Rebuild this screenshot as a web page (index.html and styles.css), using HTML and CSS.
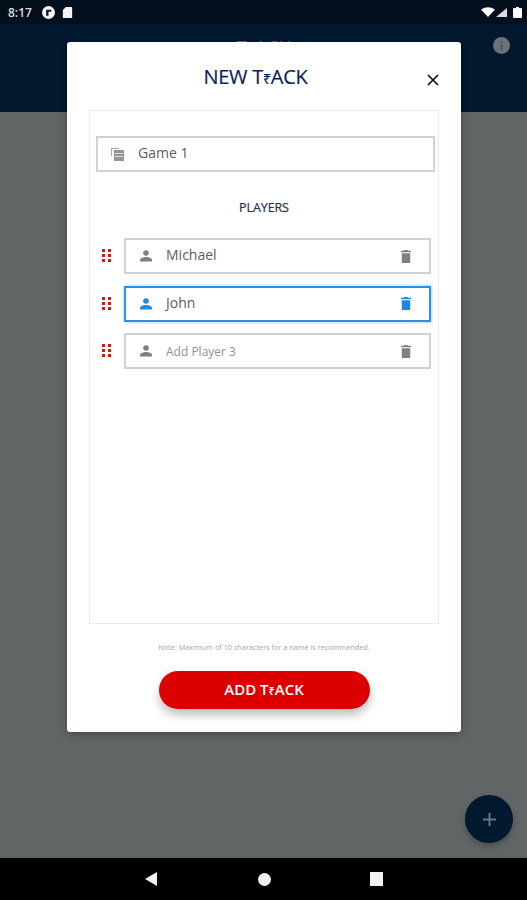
FILE: index.html
```html
<!DOCTYPE html>
<html lang="en">
<head>
  <meta charset="UTF-8" />
  <meta name="viewport" content="width=device-width, initial-scale=1.0"/>
  <title>New Track</title>
  <link rel="stylesheet" href="styles.css">
</head>
<body>
  <div class="screen">
    <div class="status-bar">
      <div class="status-left">
        <span class="clock">8:17</span>
        <svg width="13" height="13" viewBox="0 0 14 14"><circle cx="7" cy="7" r="7" fill="#f4f4f4"/><path d="M4.500 10.500V4h5.500v2.200H7v4.300z" fill="#0a1520"/></svg>
        <svg width="11" height="11" viewBox="0 0 11 13"><path d="M3.500 0H10a1 1 0 0 1 1 1V12a1 1 0 0 1-1 1H1a1 1 0 0 1-1-1V3.500z" fill="#f4f4f4"/></svg>
      </div>
      <div class="status-right">
        <svg class="wifi" width="14" height="10" viewBox="0 0 14 10"><path d="M0 2.500Q7-2 14 2.500L7 10z" fill="#fff"/></svg>
        <svg class="signal" width="11" height="9" viewBox="0 0 11 9"><path d="M11 0V9H0z" fill="#d9dcdf"/></svg>
        <svg width="9" height="11" viewBox="0 0 9 11"><path d="M3 0H6V1H8a1 1 0 0 1 1 1V10a1 1 0 0 1-1 1H1a1 1 0 0 1-1-1V2a1 1 0 0 1 1-1H3z" fill="#fff"/></svg>
      </div>
    </div>
    <div class="app-bar">
      <span class="app-title">T<span class="rupee">₹</span>ACK</span>
      <span class="info-icon">
        <svg width="17" height="17" viewBox="0 0 17 17"><circle cx="8.500" cy="8.500" r="8.500" fill="#6a7276"/><path d="M7.500 7.500h2V13h-2zM7.500 4h2v2h-2z" fill="#4a5357"/></svg>
      </span>
    </div>
    <div class="content">
      <button class="fab">
        <svg width="13" height="13" viewBox="0 0 13 13"><path d="M5.500 0h2v5.500H13v2H7.500V13h-2V7.500H0v-2h5.500z" fill="#6b7478"/></svg>
      </button>
    </div>
    <div class="nav-bar">
      <svg width="12" height="14" viewBox="0 0 12 14"><path d="M12 0V14L0 7z" fill="#f2f2f2"/></svg>
      <span class="nav-circle"></span>
      <span class="nav-square"></span>
    </div>
  </div>

  <div class="modal">
    <div class="modal-head">
      <h1>NEW T<span class="rupee">₹</span>ACK</h1>
      <button class="close">
        <svg width="12" height="12" viewBox="0 0 12 12"><path d="M1 1l10 10M11 1L1 11" stroke="#111" stroke-width="1.700"/></svg>
      </button>
    </div>

    <div class="panel">
      <div class="field game-field">
        <svg class="icon" width="15" height="15" viewBox="0 0 15 15"><path d="M1 1h8v1H2v7H1z" fill="#a8a8a8"/><path d="M4 3h10v11H4z" fill="#959595"/><path d="M5 6h8v1H5zM5 9h8v1H5z" fill="#ddd"/></svg>
        <span class="value">Game 1</span>
      </div>

      <div class="players-title">PLAYERS</div>

      <div class="player-list">
        <div class="player">
          <svg class="drag" width="10" height="14" viewBox="0 0 10 14"><use href="#dots"/></svg>
          <div class="field player-field">
            <svg class="icon" width="12" height="12" viewBox="0 0 12 12"><use href="#person"/></svg>
            <span class="value">Michael</span>
            <svg class="trash" width="10" height="13" viewBox="0 0 10 13"><use href="#trash"/></svg>
          </div>
        </div>
        <div class="player">
          <svg class="drag" width="10" height="14" viewBox="0 0 10 14"><use href="#dots"/></svg>
          <div class="field player-field active">
            <svg class="icon" width="12" height="12" viewBox="0 0 12 12"><use href="#person"/></svg>
            <span class="value">John</span>
            <svg class="trash" width="10" height="13" viewBox="0 0 10 13"><use href="#trash"/></svg>
          </div>
        </div>
        <div class="player">
          <svg class="drag" width="10" height="14" viewBox="0 0 10 14"><use href="#dots"/></svg>
          <div class="field player-field">
            <svg class="icon" width="12" height="12" viewBox="0 0 12 12"><use href="#person"/></svg>
            <span class="value placeholder">Add Player 3</span>
            <svg class="trash" width="10" height="13" viewBox="0 0 10 13"><use href="#trash"/></svg>
          </div>
        </div>
      </div>
    </div>

    <p class="note">Note: Maximum of 10 characters for a name is recommended.</p>
    <button class="add-btn">ADD T<span class="rupee">₹</span>ACK</button>
  </div>

  <svg class="defs" width="0" height="0">
    <defs>
      <g id="dots" fill="#e01010">
        <rect x="0" y="0" width="3" height="3"/><rect x="6" y="0" width="3" height="3"/>
        <rect x="0" y="5" width="3" height="3"/><rect x="6" y="5" width="3" height="3"/>
        <rect x="0" y="10" width="3" height="3"/><rect x="6" y="10" width="3" height="3"/>
      </g>
      <g id="person" fill="currentColor">
        <circle cx="6" cy="3" r="2.800"/>
        <path d="M0 11.500V10c0-2 3.500-3 6-3s6 1 6 3v1.500z"/>
      </g>
      <g id="trash" fill="currentColor">
        <path d="M3.500 0h3l.7.8H10v1.500H0V.8h2.800zM.8 3.200h8.400V13H.8z"/>
      </g>
    </defs>
  </svg>
</body>
</html>
```

FILE: styles.css
```css
* {
  box-sizing: border-box;
}

body {
  margin: 0;
  font-family: "Open Sans", "Noto Sans", sans-serif;
  background: #606565;
}

button {
  border: none;
  padding: 0;
  font-family: inherit;
  cursor: pointer;
}

.defs {
  position: absolute;
}

.rupee {
  font-size: 0.72em;
}

.screen {
  display: flex;
  flex-direction: column;
  height: 900px;
}

.status-bar {
  display: flex;
  justify-content: space-between;
  align-items: center;
  height: 24px;
  padding: 0 5px 0 8px;
  background: #030f1d;
  color: #fff;
}

.status-left,
.status-right {
  display: flex;
  align-items: center;
}

.status-left {
  gap: 7px;
}

.status-right {
  gap: 1px;
}

.status-right .signal {
  margin-right: 5px;
}

.clock {
  width: 27px;
  font-size: 12px;
  font-weight: 600;
  color: #d8dbde;
}

.app-bar {
  position: relative;
  flex: none;
  height: 88px;
  background: #02182f;
  text-align: center;
}

.app-title {
  display: block;
  padding-top: 10px;
  font-size: 19px;
  color: #6a7276;
}

.info-icon {
  position: absolute;
  top: 13px;
  right: 17px;
}

.content {
  position: relative;
  flex: 1;
  background: #606565;
}

.fab {
  position: absolute;
  right: 14px;
  bottom: 15px;
  display: flex;
  justify-content: center;
  align-items: center;
  width: 48px;
  height: 48px;
  border-radius: 50%;
  background: #02182f;
  box-shadow: 0 3px 6px rgba(0, 0, 0, 0.25);
}

.nav-bar {
  display: flex;
  align-items: center;
  justify-content: space-between;
  height: 42px;
  padding: 0 144px 0 145px;
  background: #000;
}

.nav-circle {
  width: 13px;
  height: 13px;
  margin-left: 2px;
  border-radius: 50%;
  background: #f2f2f2;
}

.nav-square {
  width: 13px;
  height: 14px;
  background: #f2f2f2;
}

.modal {
  position: absolute;
  top: 42px;
  left: 67px;
  display: flex;
  flex-direction: column;
  align-items: center;
  width: 394px;
  height: 690px;
  padding: 0 22px;
  background: #fff;
  border-radius: 3px;
  box-shadow: 0 2px 8px rgba(0, 0, 0, 0.3);
}

.modal-head {
  position: relative;
  width: 100%;
  height: 68px;
  text-align: center;
}

.modal-head h1 {
  margin: 0;
  padding: 21px 17px 0 0;
  font-size: 20px;
  font-weight: 400;
  letter-spacing: -0.3px;
  line-height: 28px;
  color: #0b1f57;
  -webkit-text-stroke: 0.2px #0b1f57;
}

.close {
  position: absolute;
  top: 32px;
  right: 0;
  display: flex;
  background: none;
}

.panel {
  width: 350px;
  height: 514px;
  padding: 25px 3px 0 6px;
  border: 1px solid #ececec;
}

.field {
  display: flex;
  align-items: center;
  border: 2px solid #d2d2d2;
  background: #fff;
}

.game-field {
  height: 36px;
  padding-left: 12px;
}

.game-field .icon {
  margin-right: 13px;
}

.value {
  padding-bottom: 3px;
  font-size: 14px;
  color: #5c5c5c;
}

.players-title {
  margin: 28px 0 22px;
  padding-right: 3px;
  font-size: 12.500px;
  line-height: 16px;
  letter-spacing: -0.1px;
  text-align: center;
  color: #1d2f5e;
  -webkit-text-stroke: 0.2px #1d2f5e;
}

.player-list {
  display: flex;
  flex-direction: column;
  gap: 11.5px;
}

.player {
  display: flex;
  align-items: center;
  gap: 12px;
  padding-left: 6px;
  padding-right: 4px;
}

.player-field {
  flex: 1;
  height: 36px;
  padding: 0 18px 0 14px;
  color: #808080;
}

.player-field .icon {
  margin-right: 14px;
}

.player-field .value {
  flex: 1;
}

.player-field.active {
  border-color: #2a90ea;
  box-shadow: 0 0 3px rgba(30, 136, 229, 0.5);
  color: #1e88e5;
}

.player-field .value.placeholder {
  padding-bottom: 0;
  font-size: 12px;
  color: #909090;
}

.note {
  margin: 18px 0 0;
  font-size: 7.300px;
  line-height: 11px;
  color: #a5a5a5;
}

.add-btn {
  width: 211px;
  height: 38px;
  margin-top: 18px;
  padding-bottom: 3px;
  border-radius: 19px;
  background: #dc0000;
  color: #fff;
  font-size: 15px;
  font-weight: 600;
  box-shadow: 0 6px 10px rgba(0, 0, 0, 0.25);
}
```
